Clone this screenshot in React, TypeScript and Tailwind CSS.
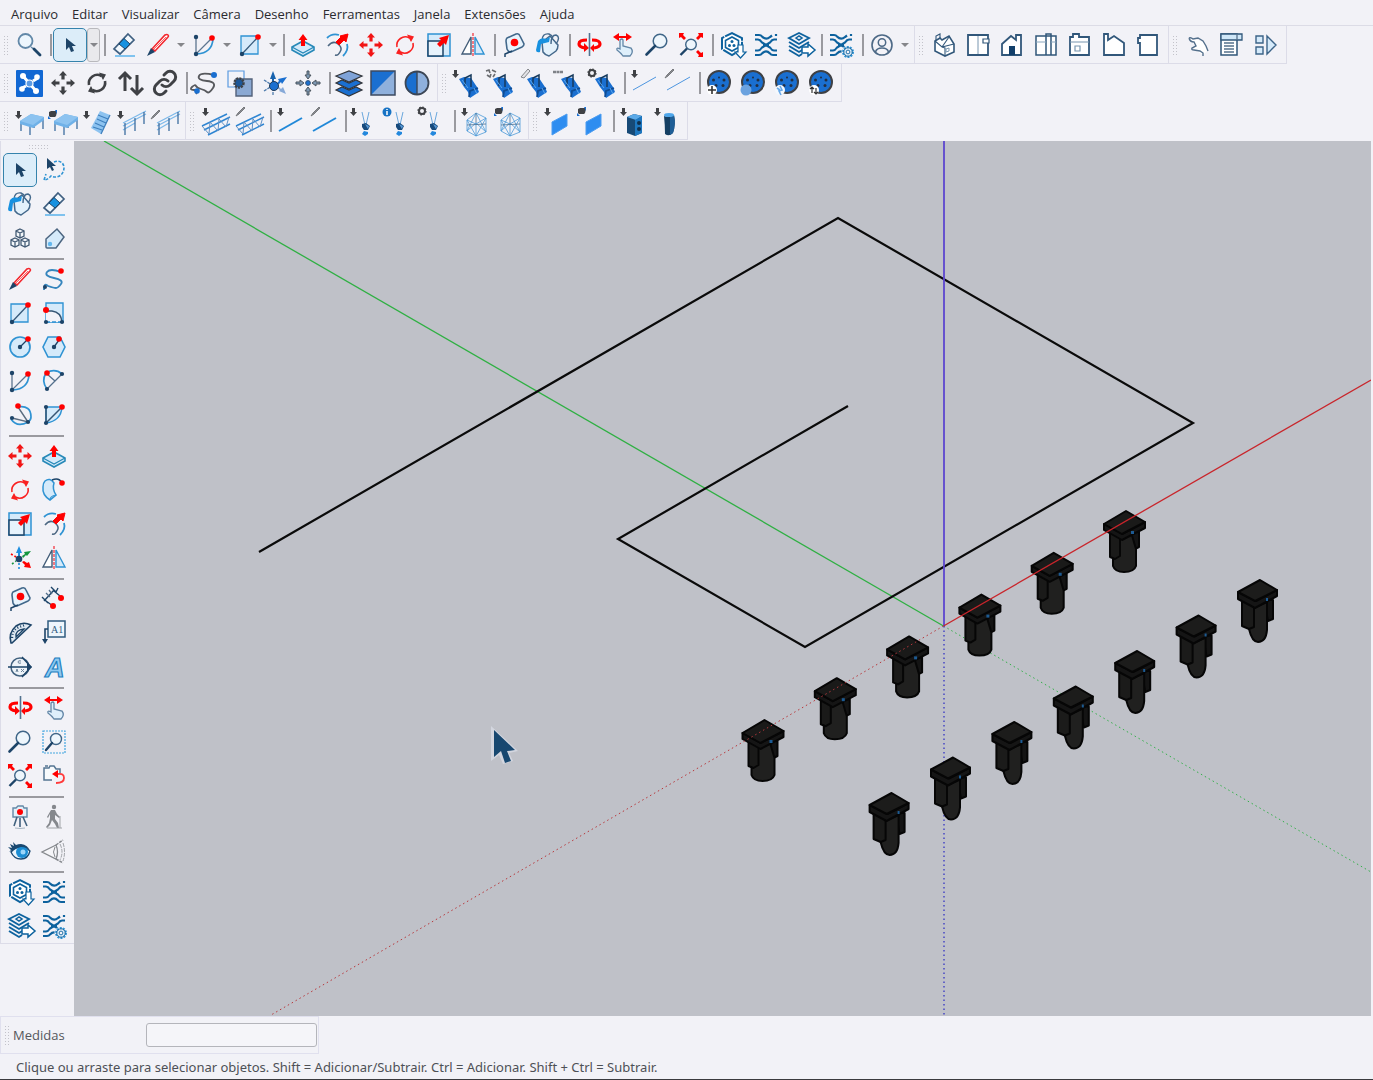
import React from 'react';

const NAVY = '#1d4468';
const BLUE = '#2f93d3';
const SKY = '#d5eafa';
const RED = '#ff0000';
const DARK = '#3f4145';
const STEEL = '#1a6fd0';

const DOWN_BADGE = <path d="M0 0h3v4h2l-3.5 4L-2 4h2z" fill={DARK} />;
const PEN_BADGE = <path d="M-2 8 0 5 6-1 7 0 1 6z" fill="#8b8d92" stroke="#77797d" strokeWidth="1" />;
const BLOB_BADGE = (
  <>
    <path d="M-2 1 0 0h5l1 1-1 4-1 1h-5l-1-1z" fill={DARK} />
    <path d="M-3 5v3h3M6 3V-1H4" fill={STEEL} />
  </>
);
const GEAR_BADGE = (
  <>
    <circle cx="2" cy="3" r="3" fill="none" stroke={DARK} strokeWidth="2" />
    <circle cx="2" cy="3" r="4" fill="none" stroke={DARK} strokeWidth="1.2" strokeDasharray="1.6 1.5" />
  </>
);

// four arrows pointing away from the middle
const moveArrows = (color: string) => (
  <g fill={color}>
    {[0, 90, 180, 270].map((angle) => (
      <path key={angle} transform={`rotate(${angle} 12 12)`} d="M12 0l4 4.5h-2.4v4h-3.2v-4H8z" />
    ))}
  </g>
);

const syncArrows = (color: string, width: number) => (
  <>
    <path d="M4 14A8.5 8.5 0 0 1 16.5 5M20 10A8.5 8.5 0 0 1 7.5 19" fill="none" stroke={color} strokeWidth={width} />
    <path d="M14 1.5 21 3.5 18 9zM10 22.500 3 20.5 6 15z" fill={color} />
  </>
);

const magnifier = (
  <>
    <circle cx="15" cy="8" r="6.8" fill="#eef6fc" stroke="#3f6688" strokeWidth="1.5" />
    <path d="M10 13 1.5 21.5" stroke={NAVY} strokeWidth="2.6" strokeLinecap="round" />
  </>
);

const fitArrows = (
  <>
    <circle cx="12" cy="11.5" r="5.3" fill="#eef6fc" stroke="#3f6688" strokeWidth="1.4" />
    <path d="M8 15.5 1.5 22" stroke={NAVY} strokeWidth="2.4" />
    <path
      d="M0 0h5L4 2l3 3-2 2-3-3-2 1zM24 0v5l-2-1-3 3-2-2 3-3-1-2zM24 24h-5l1-2-3-3 2-2 3 3 2-1z"
      fill={RED}
    />
  </>
);

const wave = (
  <g fill="none" stroke="#0d629e" strokeWidth="2.2">
    <path d="M1 2h4q2 0 3 1.500 4 4 8 .5l2-1.500M1 22h4q2 0 3-1.500 4-4 8 0 1 1.500 3 1.500h4M22 1v2" />
    <path d="M1 6.500h3q2 0 4 3l4 2.500 4-2.500q2-3 4-3h3M1 17.500h3q2 0 4-3l4-2.500 4 2.500q2 3 4 3h3" />
    <path d="M9 12h6" />
  </g>
);

const smallGear = (
  <>
    <circle cx="19" cy="19" r="6.5" fill="#f3f3f8" />
    <circle cx="19" cy="19" r="5" fill="none" stroke={BLUE} strokeWidth="2" strokeDasharray="2 1.1" />
    <circle cx="19" cy="19" r="4.2" fill="#e3f1fb" stroke="#0d629e" strokeWidth="1" />
    <circle cx="19" cy="19" r="1.9" fill="#f3f3f8" stroke="#0d629e" strokeWidth="0.9" />
  </>
);

const fixture = (badge: React.ReactNode) => (
  <>
    <path d="M4 8l5-2 7 1 6 9 2 5-9 6-2-6-4-5z" fill={STEEL} />
    <path d="M10 15V7l6-3v12" fill="none" stroke="#173a5c" strokeWidth="1.5" />
    <path d="M14 26l1-6 8-3" fill="none" stroke="#0f4c93" strokeWidth="1.800" />
    <path d="M19 17l3 6M7 9l6 8" stroke="#5ba7ee" strokeWidth="1" />
    <g transform="translate(-1 -1)">{badge}</g>
  </>
);

const socket = (badge: React.ReactNode) => (
  <>
    <circle cx="12" cy="11" r="11" fill={STEEL} stroke={DARK} strokeWidth="2" />
    <g fill="#222f42">
      <circle cx="6.5" cy="9" r="1.5" />
      <circle cx="12" cy="6.5" r="1" />
      <circle cx="17" cy="9" r="1.5" />
      <circle cx="9" cy="14.5" r="1.5" />
      <circle cx="16" cy="14.5" r="1.5" />
    </g>
    {badge}
  </>
);

const platform = (badge: React.ReactNode) => (
  <>
    <path d="M4 13v9M13 17v9M26 9v11M17 15v4" stroke="#3c6da0" strokeWidth="1.3" />
    <path d="M3 12 14 5l13 3v3l-11 8-13-4z" fill="#6fb1e8" />
    <path d="M3 12 14 5l13 3-11 8z" fill="#8dc3f0" />
    <g transform="translate(0 2)">{badge}</g>
  </>
);

const railing = (badge: React.ReactNode) => (
  <>
    <path d="M4 14 27 2M4 17 27 5M4 21l12-7" stroke="#7db9ea" strokeWidth="1.3" />
    <path d="M6 14v12M16 9v13M25 3v12" stroke="#3c6da0" strokeWidth="1.3" />
    <g transform="translate(0 2)">{badge}</g>
  </>
);

const truss = (badge: React.ReactNode) => (
  <>
    <g fill="none" stroke="#2f86d3">
      <path d="M-1 17 24 5M1 21 27 8M5 26l22-11" strokeWidth="1.5" />
      <path d="M-1 17l7 8 1-12 8 9 1-12 7 8 3-10" stroke="#5f8fc4" strokeWidth="1" />
    </g>
    <g transform="translate(1 -1)">{badge}</g>
  </>
);

const bar = (badge: React.ReactNode, top: number, width: number) => (
  <>
    <path d={`M1 ${top + 13}L24 ${top}`} stroke={width > 1 ? '#2088d8' : '#4d96e0'} strokeWidth={width} />
    <g transform="translate(1 -1)">{badge}</g>
  </>
);

const hanging = (badge: React.ReactNode) => (
  <>
    <path d="M9 3l3 13M16 3l-3 13" stroke="#6aa7dd" strokeWidth="1" />
    <path d="M9 15l4-1 4 3-2 4h-4l-2-3z" fill="#174a7c" />
    <path d="M12 15l4 2-1 3z" fill="#5a9bd8" />
    <path d="M11 22l4 1v2l-3 2-3-2z" fill="#2388dd" />
    <g transform="translate(-1 -1)">{badge}</g>
  </>
);

const wireCube = (badge: React.ReactNode) => (
  <>
    <g fill="none" stroke="#4c9ad8" strokeWidth="0.8">
      <path d="M5 11 14 4l10 5v14l-10 4-9-5zM5 11l9 4 10-6M14 15v12M5 11l9 16L24 9M5 22l9-18 10 19M5 22l9-8 10 9" />
      <path d="M14 4v10M5 16l19-1" stroke="#4d7090" />
    </g>
    <g transform="translate(1 -1)">{badge}</g>
  </>
);

const panel = (badge: React.ReactNode) => (
  <>
    <path d="M6 13 21 5v12L6 26z" fill="#2e8df0" stroke="#4b9cf0" strokeWidth="1" />
    <g transform="translate(0 -1)">{badge}</g>
  </>
);

const icons: Record<string, React.ReactNode> = {
  search: (
    <>
      <circle cx="8.5" cy="8" r="7" fill="#edf6fd" stroke="#6288a8" strokeWidth="1.8" />
      <path d="M14 14l4 3" stroke="#6288a8" strokeWidth="1.4" />
      <path d="M17 16l6 6" stroke={NAVY} strokeWidth="2.8" strokeLinecap="round" />
    </>
  ),
  select: <path d="M8 5v12l3-3 2 5 3-1-2-5h4z" fill={NAVY} />,
  lasso: (
    <>
      <path d="M12 4c8-3 12 4 9 10-2 5-8 6-12 4-2 2-4 4-7 4l2-6" fill="none" stroke={BLUE} strokeWidth="1.6" strokeDasharray="3 1.5" />
      <path d="M5 0v11l3-2 2 4 2-1-2-4h4z" fill={NAVY} />
    </>
  ),
  eraser: (
    <>
      <path d="M16 1l6 6L8 21l-6-5z" fill="#f2f8fd" stroke="#3f5f80" strokeWidth="1.7" />
      <path d="M12 5.5l6 5.500-5 5-6-5z" fill="#1791e0" stroke={NAVY} />
      <path d="M3 23h20" stroke="#62b6ec" strokeWidth="1.6" />
    </>
  ),
  pencil: (
    <>
      <path d="M6 16 19 2q2-1 3 0t0 2L9 18z" fill="#fff" stroke="#f3262d" strokeWidth="1.6" />
      <path d="M8 16 20 4" stroke="#f3262d" strokeWidth="0.7" />
      <path d="M1 23l4-8 4 4z" fill={NAVY} />
    </>
  ),
  arc: (
    <>
      <path d="M4 4v17L20 5" fill="none" stroke="#5c7590" strokeWidth="1.3" />
      <path d="M5 21Q20 20 21 6" fill="none" stroke={BLUE} strokeWidth="1.7" />
      <circle cx="4" cy="4" r="2.2" fill={NAVY} />
      <circle cx="4" cy="21" r="2.2" fill={NAVY} />
      <circle cx="20" cy="5" r="2.8" fill={RED} />
    </>
  ),
  rectangle: (
    <>
      <path d="M3 3h17v18H3z" fill={SKY} stroke={BLUE} strokeWidth="1.3" />
      <path d="M4 21 20 4" stroke="#35597a" strokeWidth="1.3" />
      <circle cx="4" cy="21" r="2.2" fill={NAVY} />
      <circle cx="20" cy="4" r="2.8" fill={RED} />
    </>
  ),
  pushPull: (
    <>
      <path d="M1 14 12 8l11 6v3l-11 6L1 17z" fill={SKY} stroke="#2789b8" strokeWidth="1.6" />
      <path d="M1 14l11 6 11-6" fill="none" stroke="#2789b8" strokeWidth="1.3" />
      <path d="M12 1l4.500 6h-2.500v6h-4V7H7.5z" fill={RED} />
    </>
  ),
  offset: (
    <>
      <path d="M2 5Q7 0 14 2M22 11q2 6-4 12" fill="none" stroke={BLUE} strokeWidth="1.8" />
      <path d="M3 13q5-6 10-2t2 8q-2 4-5 3" fill="none" stroke="#4d6883" strokeWidth="1.5" />
      <path d="M15 3l8-2-2 8-2-2-5 5-3-3 5-5z" fill={RED} stroke={RED} strokeWidth="1" />
    </>
  ),
  move: moveArrows('#f21515'),
  rotate: syncArrows('#fa2020', 1.6),
  scale: (
    <>
      <path d="M1 1h22v22H1z" fill={SKY} stroke={BLUE} strokeWidth="1.5" />
      <path d="M1 8h15v15H1z" fill="#e7f3fc" stroke={NAVY} strokeWidth="1.5" />
      <path d="M12 5l10-3-3 10-2-2-4 4-3-3 4-4z" fill={RED} />
    </>
  ),
  flip: (
    <>
      <path d="M10 4v17H1z" fill="#fff" stroke="#435d79" strokeWidth="1.4" />
      <path d="M14 4v17h9z" fill={SKY} stroke={BLUE} strokeWidth="1.4" />
      <path d="M12 0v23" stroke="#f26d75" strokeWidth="1.8" strokeDasharray="3 1" />
    </>
  ),
  tape: (
    <>
      <path d="M5 5 14 1q3-1 4 2l4 8q0 2-2 3L9 19q-3 0-4-3L4 8q0-2 1-3z" fill="#e7f3fc" stroke="#42688b" strokeWidth="1.6" />
      <path d="M10 18 3 21v3" fill="none" stroke={NAVY} strokeWidth="1.5" />
      <circle cx="12.500" cy="9.5" r="3.8" fill={RED} />
    </>
  ),
  paint: (
    <>
      <path d="M6 9 14 3l8 9q0 4-2 6l-7 5q-4-1-6-4z" fill="#e3f1fb" stroke="#43688b" strokeWidth="1.5" />
      <path d="M6 8q0-8 7-7 3 1 4 4M15 11q0-9 5-9 5 2 0 9" fill="none" stroke="#43688b" strokeWidth="1.4" />
      <path d="M2 8q3-4 8-2l4-2-1 5-8 2-1 8q-4 1-4-2z" fill="#1791e0" />
    </>
  ),
  orbit: (
    <>
      <path d="M10 7Q2 7 2 11q0 3 6 4M15 7q8 0 8 4 0 3-6 4" fill="none" stroke={RED} strokeWidth="3.2" />
      <path d="M7 10l5 5-5 4zM17 11l-4 4 4 4z" fill={RED} />
      <path d="M12.5 0v23" stroke="#53728f" strokeWidth="1.6" />
    </>
  ),
  pan: (
    <>
      <path d="M9 7q2-2 3 0v6l8 2q3 4-1 8h-7q-2-3-6-6-1-3 3-1z" fill="#deeffb" stroke="#6386a6" strokeWidth="1.3" />
      <path d="M2 4l6-4v3h7V0l6 4-6 4V5H8v3z" fill={RED} />
    </>
  ),
  zoom: magnifier,
  zoomExtents: fitArrows,
  warehouse: (
    <>
      <path d="M12 0l10 5v11l-10 6-10-6V5z" fill="#fff" stroke="#0d629e" strokeWidth="2" strokeDasharray="14 1" />
      <path d="M12 4l6.5 3.5v7L12 18l-6.5-3.5v-7z" fill="none" stroke="#0d629e" strokeWidth="1.6" />
      <circle cx="12" cy="8.5" r="1.5" fill="#0d629e" />
      <circle cx="9.5" cy="12.500" r="1.5" fill="#0d629e" />
      <circle cx="14" cy="12.500" r="1.5" fill="#0d629e" />
      <path d="M18 12h5v7h3l-5.5 6L15 19h3z" fill="#fff" stroke="#0d629e" strokeWidth="1.2" />
    </>
  ),
  extensionStore: wave,
  shareModel: (
    <>
      <g fill="none" stroke="#0d629e" strokeWidth="1.9">
        <path d="M1 5l10-5 10 5-10 6zM1 9l10 6 10-6M1 13l10 6 5-3M1 17l10 6 3-2" />
        <path d="M8 5l3-2 3 2-3 2z" strokeWidth="1.5" />
      </g>
      <path d="M14 14h6v-3l7 6-7 6v-3h-6z" fill="#fff" stroke="#0d629e" strokeWidth="1.5" />
    </>
  ),
  extensionManager: (
    <>
      {wave}
      {smallGear}
    </>
  ),
  account: (
    <>
      <circle cx="12" cy="12" r="10" fill="#f3f3f8" stroke="#4d6986" strokeWidth="1.6" />
      <circle cx="12" cy="9.5" r="3.7" fill="none" stroke="#4d6986" strokeWidth="1.5" />
      <path d="M5.5 19q1-4 6.500-4t6.500 4" fill="none" stroke="#4d6986" strokeWidth="1.6" />
    </>
  ),
  viewIso: (
    <>
      <path d="M3 8l5-3 2 2 7-4 5 8v8l-9 4-10-5z" fill="#fff" stroke="#31577a" strokeWidth="1.6" />
      <path d="M3 8l7 6 7-10M10 14l3 1v8M10 14l12-3M4 7V3l4-2v4" fill="none" stroke="#31577a" strokeWidth="1.1" />
      <path d="M14 16l3-1v3l-3 1z" fill="none" stroke="#7896b0" strokeWidth="1" />
    </>
  ),
  viewTop: (
    <>
      <path d="M2 2h20v20H2z" fill="#fff" stroke="#31577a" strokeWidth="1.8" />
      <path d="M12 3v18" stroke="#7896b0" />
      <path d="M17 6h6v4h-6z" stroke="#31577a" strokeWidth="1.200" fill="#fff" />
    </>
  ),
  viewFront: (
    <>
      <path d="M2 22V11l9-8 5 4V2h5v20z" fill="#fff" stroke="#31577a" strokeWidth="1.8" />
      <path d="M9 13h6v9H9z" fill="#123f6a" />
    </>
  ),
  viewRight: (
    <>
      <path d="M2 3h20v19H2zM12 1h5v21h-5z" fill="#fff" stroke="#31577a" strokeWidth="1.5" />
      <path d="M2 9h10M17 9h5" stroke="#8ba7bf" />
    </>
  ),
  viewBack: (
    <>
      <path d="M2 4h3V1h6v3h10v18H2z" fill="#fff" stroke="#31577a" strokeWidth="1.8" />
      <path d="M2 9h19M7 13h5v5H7z" fill="none" stroke="#7896b0" strokeWidth="1.2" />
    </>
  ),
  viewLeft: <path d="M2 22V1h4v6l6-4 10 7v12z" fill="#fff" stroke="#31577a" strokeWidth="1.800" />,
  viewBottom: <path d="M4 2h17v20H4V10H2V5h2z" fill="#fff" stroke="#31577a" strokeWidth="1.800" />,
  interact: (
    <>
      <path d="M5 6l7 1 5 2 5 8-5 5-8-5-3-4 4 1-3-4z" fill="#fff" />
      <path d="M3 5q2-1 4 1l5-1 5 3 3 5 2 5M3 5q1 4 5 4l2 4-4 2q-1 2 2 2l6 1 3 2v3" fill="none" stroke="#54708c" strokeWidth="1.4" />
    </>
  ),
  componentOptions: (
    <>
      <path d="M1 1h16v21H1z" fill="#fff" stroke="#31577a" strokeWidth="1.5" />
      <path d="M1 1h21v6H1z" fill="#cfe7f8" stroke="#31577a" strokeWidth="1.3" />
      <path d="M17 1v6M4 10h10M4 13h10M4 16h10M4 19h10" stroke="#56718c" strokeWidth="1.3" />
    </>
  ),
  componentAttributes: (
    <path d="M2 3h7v7H2zM2 14h7v7H2zM13 3l9 9-9 9z" fill={SKY} stroke="#3c6488" strokeWidth="1.4" />
  ),
  nodeTruss: (
    <>
      <rect x="-1" y="-1" width="27" height="27" rx="1" fill="#1268d3" />
      <path d="M6 5l13 15M21 7l-5 3M3 18l6-3" stroke="#fff" strokeWidth="3" fill="none" />
      <g fill="#fff">
        <circle cx="6" cy="5" r="3" />
        <circle cx="20" cy="6" r="2.8" />
        <circle cx="5" cy="18" r="2.8" />
        <circle cx="19" cy="20" r="3" />
      </g>
      <circle cx="12.5" cy="12.5" r="3.5" fill="#5b9ae3" stroke="#fff" strokeWidth="1.2" />
    </>
  ),
  moveDark: moveArrows(DARK),
  syncDark: syncArrows(DARK, 2.6),
  swap: (
    <path
      d="M6 20V2M0 8l6-6 6 6M18 4v19M12 17l6 6 6-6"
      fill="none"
      stroke={DARK}
      strokeWidth="3"
    />
  ),
  link: (
    <g fill="none" stroke={DARK} strokeWidth="3" strokeLinecap="round">
      <path d="M9 14a6 6 0 0 0 8 0l4-4a5.500 5.500 0 0 0-8-8l-2 2" />
      <path d="M15 10a6 6 0 0 0-8 0l-4 4a5.500 5.500 0 0 0 8 8l2-2" />
    </g>
  ),
  cable: (
    <>
      <path d="M20 4Q7 1 5 5t8 5 6 7-6 4-6-3-5-3-4 1 2 3 2 4" fill="none" stroke="#57595d" strokeWidth="1.8" />
      <circle cx="20" cy="4" r="3" fill={STEEL} />
      <circle cx="3" cy="20" r="2.8" fill={STEEL} />
    </>
  ),
  group: (
    <>
      <path d="M0 0h16v16H0z" fill="#f3f3f8" stroke="#5a9ae0" strokeWidth="1.2" />
      <path d="M8 8h16v17H8z" fill="#8ba9d3" stroke="#53617a" strokeWidth="1.4" />
      <circle cx="11" cy="12" r="4.500" fill="#1d5798" stroke={DARK} strokeWidth="2.5" strokeDasharray="2 1" />
    </>
  ),
  axesBlue: (
    <>
      <path d="M11 0l3 8h-2v6h-2V8H8z" fill="#1762ae" />
      <path d="M25 6l-5 7-1-2-4 4-1-2 3-3-1-2z" fill={STEEL} />
      <path d="M2 9l8 5M2 20l8-5M11 24v-7" stroke="#4f7cad" strokeWidth="1.3" strokeDasharray="3 1" />
      <path d="M24 23l-7-3 1-1-4-3 2-1 3 3 2-2z" fill="#86a9d8" />
      <circle cx="12" cy="15" r="4.500" fill={STEEL} stroke="#1e3a58" />
    </>
  ),
  gather: (
    <>
      <g fill="#7d98b3" stroke="#4b545e" strokeWidth="1">
        {[0, 90, 180, 270].map((angle) => (
          <path key={angle} transform={`rotate(${angle} 12 12)`} d="M11 0h2v4h2l-3 4-3-4h2z" />
        ))}
      </g>
      <circle cx="12" cy="12" r="2.4" fill={STEEL} stroke="#35567c" />
    </>
  ),
  layers: (
    <g stroke="#30343a" strokeWidth="1.2">
      <path d="M-1 19l6-3 7 3 7-3 6 3-13 6z" fill={STEEL} />
      <path d="M-1 12l6-3 7 3 7-3 6 3-13 6z" fill={STEEL} />
      <path d="M-1 5l13-5 13 5-13 6z" fill="#7fa3d8" />
    </g>
  ),
  splitSquare: (
    <>
      <path d="M0 0h24v24H0z" fill="#8fb0dc" />
      <path d="M0 0h24L0 24z" fill={STEEL} />
      <path d="M0 0h24v24H0z" fill="none" stroke="#3c4a60" strokeWidth="1.5" />
    </>
  ),
  splitCircle: (
    <>
      <circle cx="12" cy="12" r="11.5" fill="#8fb0dc" />
      <path d="M12 0a12 12 0 0 0 0 24z" fill={STEEL} />
      <circle cx="12" cy="12" r="11.5" fill="none" stroke="#3c4655" strokeWidth="1.8" />
      <path d="M12 0v24" stroke="#3c4655" strokeWidth="1.4" />
    </>
  ),
  fixtureAdd: fixture(DOWN_BADGE),
  fixtureGroup: fixture(<path d="M-2 1l3-1 1 3M4 0l4 2M-1 5l3 2 1-3M5 7l2-3" fill="none" stroke="#6a6c70" strokeWidth="1.6" />),
  fixtureLink: fixture(<path d="M-1 7l7-8 2 2-6 7z" fill="#e2e2e6" stroke="#85878c" strokeWidth="1" />),
  fixtureLine: fixture(<path d="M-3 2H7" stroke="#7f8288" strokeWidth="2.400" strokeDasharray="3 .5" />),
  fixtureGear: fixture(GEAR_BADGE),
  wireAdd: bar(DOWN_BADGE, 6, 1),
  wireDraw: bar(PEN_BADGE, 6, 1),
  socketAdd: socket(
    <>
      <circle cx="5" cy="19" r="5" fill="#fff" />
      <path d="M5 15v8M1 19h8" stroke="#333" strokeWidth="1.6" />
    </>
  ),
  socketLamp: socket(<circle cx="5" cy="19" r="5.5" fill="#6ba2df" />),
  socketGear: socket(
    <>
      <circle cx="5" cy="19" r="5" fill="#f4f8fd" />
      <path d="M5 15l2 4-3 1 2 4M2 17l3 2" fill="none" stroke="#69aaea" strokeWidth="1.6" />
    </>
  ),
  socketSwap: socket(
    <>
      <circle cx="5" cy="19" r="5" fill="#fff" />
      <path d="M3 22v-6M1 18l2-2 2 2M7 17v6M5 21l2 2 2-2" fill="none" stroke="#333" strokeWidth="1.2" />
    </>
  ),
  platformAdd: platform(DOWN_BADGE),
  platformEdit: platform(BLOB_BADGE),
  stairs: (
    <>
      <path d="M6 19 15 2l10 4-9 19z" fill="#8dc3f0" />
      <path d="M8 18l9 3M10 14l9 4M12 10l9 4M13 6l10 4" stroke="#3e7fbd" strokeWidth="1.1" />
      <path d="M25 6l-9 19" stroke="#3e7fbd" strokeWidth="1.3" />
      <g transform="translate(0 2)">{DOWN_BADGE}</g>
    </>
  ),
  railAdd: railing(DOWN_BADGE),
  railDraw: railing(PEN_BADGE),
  trussAdd: truss(DOWN_BADGE),
  trussDraw: truss(PEN_BADGE),
  barAdd: bar(DOWN_BADGE, 9, 2),
  barDraw: bar(PEN_BADGE, 9, 2),
  hangAdd: hanging(DOWN_BADGE),
  hangInfo: hanging(
    <>
      <circle cx="1" cy="4" r="4.5" fill="#1873c4" />
      <path d="M1 3v4M1 1v1" stroke="#fff" strokeWidth="1.5" />
    </>
  ),
  hangGear: hanging(GEAR_BADGE),
  cubeAdd: wireCube(DOWN_BADGE),
  cubeEdit: wireCube(BLOB_BADGE),
  panelAdd: panel(DOWN_BADGE),
  panelEdit: panel(BLOB_BADGE),
  speaker: (
    <>
      <path d="M6 8l7-3 8 2v17l-7 3-8-3z" fill="#174a77" />
      <path d="M6 8l7-3 8 2-6 4z" fill="#5aa9e8" />
      <path d="M14 11l7-4v17l-7 3z" fill="#1d77c0" />
      <circle cx="18" cy="14" r="2" fill="#102f4c" />
      <circle cx="18" cy="20" r="2" fill="#102f4c" />
      <g transform="translate(1 -1)">{DOWN_BADGE}</g>
    </>
  ),
  column: (
    <>
      <path d="M9 7q5 2 10-1 2 9-1 18-4 4-8 1 0-9-1-18z" fill="#153f63" />
      <path d="M15 8q3 0 4-2 2 9-1 18l-3 2z" fill="#1f5f97" />
      <ellipse cx="14" cy="6" rx="5" ry="2" fill="#4ea6ea" />
      <g transform="translate(1 -1)">{DOWN_BADGE}</g>
    </>
  ),
  components: (
    <g fill="#f5f8fb" stroke="#435b75" strokeWidth="1.3">
      <path d="M12 3l4 2v5l-4 2-4-2V5zM8 5l4 2 4-2M12 7v5" />
      <path d="M7 12l4 2v5l-4 2-4-2v-5zM3 14l4 2 4-2M7 16v5" />
      <path d="M17 12l4 2v5l-4 2-4-2v-5zM13 14l4 2 4-2M17 16v5" />
    </g>
  ),
  tag: (
    <>
      <path d="M4 13 15 3l7 8-8 11H5q-1 0-1-1z" fill={SKY} stroke="#4c6580" strokeWidth="1.5" />
      <circle cx="8" cy="18" r="2.2" fill="#62b7ee" />
    </>
  ),
  freehand: (
    <>
      <path d="M19 5Q8 1 5 5t7 6 7 6-5 4-8-2q-4-4-4 4" fill="none" stroke="#3585bd" strokeWidth="1.8" />
      <circle cx="19" cy="4" r="2.8" fill={RED} />
      <circle cx="3" cy="20" r="2" fill={NAVY} />
    </>
  ),
  rotatedRectangle: (
    <>
      <path d="M4 2h17v19H4z" fill={SKY} stroke={BLUE} strokeWidth="1.4" />
      <path d="M4 10h6q9 1 10 11H4z" fill="#f3f3f8" />
      <path d="M4 10h6q9 1 10 11" fill="none" stroke="#355573" strokeWidth="1.5" />
      <path d="M4 21h16" stroke={BLUE} strokeWidth="1.4" strokeDasharray="4 2" />
      <circle cx="4" cy="21" r="2.1" fill={NAVY} />
      <circle cx="20" cy="21" r="2.1" fill={NAVY} />
      <circle cx="4" cy="9" r="3" fill={RED} />
    </>
  ),
  circle: (
    <>
      <circle cx="12" cy="12" r="10" fill={SKY} stroke={BLUE} strokeWidth="1.7" />
      <path d="M12 12l7-7" stroke={NAVY} strokeWidth="1.3" />
      <circle cx="12" cy="12" r="2.2" fill={NAVY} />
      <circle cx="20" cy="4" r="2.8" fill={RED} />
    </>
  ),
  polygon: (
    <>
      <path d="M6 2h12l5 10-5 10H6L1 12z" fill={SKY} stroke={BLUE} strokeWidth="1.6" />
      <path d="M12 12l5-7" stroke={NAVY} strokeWidth="1.3" />
      <circle cx="12" cy="12" r="2.2" fill={NAVY} />
      <circle cx="17" cy="4" r="2.8" fill={RED} />
    </>
  ),
  arcTwoPoint: (
    <>
      <path d="M4 4Q13-1 20 5M4 4q-5 8 1 16" fill="none" stroke={BLUE} strokeWidth="1.7" />
      <path d="M5 5l8 7M5 20 20 5" stroke="#54708c" strokeWidth="1.3" />
      <circle cx="20" cy="5" r="2.1" fill={NAVY} />
      <circle cx="5" cy="20" r="2.1" fill={NAVY} />
      <circle cx="5" cy="4" r="2.8" fill={RED} />
    </>
  ),
  arcThreePoint: (
    <>
      <path d="M10 4q13-2 13 10 0 3-3 5M3 16q6 9 17 3" fill="none" stroke={BLUE} strokeWidth="1.7" />
      <path d="M10 4l10 15L4 15" fill="none" stroke="#5b6d80" strokeWidth="1.4" />
      <circle cx="4" cy="15" r="2.1" fill={NAVY} />
      <circle cx="20" cy="19" r="2.1" fill={NAVY} />
      <circle cx="10" cy="3" r="2.8" fill={RED} />
    </>
  ),
  pie: (
    <>
      <path d="M4 4h16Q19 18 4 20z" fill={SKY} stroke={BLUE} strokeWidth="1.5" />
      <path d="M4 4v16L20 4" fill="none" stroke="#355573" strokeWidth="1.5" />
      <circle cx="4" cy="4" r="2.1" fill={NAVY} />
      <circle cx="4" cy="20" r="2.1" fill={NAVY} />
      <circle cx="20" cy="4" r="2.8" fill={RED} />
    </>
  ),
  followMe: (
    <>
      <path d="M3 3q5-4 9 2-2 6 2 12l-6 5Q0 17 1 9q0-4 2-6z" fill={SKY} stroke={BLUE} strokeWidth="1.5" />
      <path d="M8 22q0-4 6-5" fill="none" stroke={BLUE} strokeWidth="1.2" />
      <path d="M10 2q7-3 10 3" fill="none" stroke={NAVY} strokeWidth="1.5" />
      <circle cx="20" cy="5" r="2.8" fill={RED} />
    </>
  ),
  axes: (
    <>
      <path d="M11 0l3 7h-2v4h-2V7H8z" fill="#1f8fe0" />
      <path d="M23 5l-4 5-1-1-3 3-1-2 3-2-1-2z" fill="#15963f" />
      <path d="M23 22l-7-1 1-2-3-3 2-1 3 2 2-1z" fill={RED} />
      <path d="M3 8l5 3" stroke={RED} strokeWidth="1.6" strokeDasharray="2 2" />
      <path d="M4 18l4-3" stroke="#15963f" strokeWidth="1.6" strokeDasharray="2 2" />
      <path d="M11 17v6" stroke="#1f8fe0" strokeWidth="1.6" strokeDasharray="2 2" />
      <circle cx="11" cy="13" r="3.3" fill={NAVY} />
    </>
  ),
  dimension: (
    <>
      <path d="M2 14 12 3M9 0l5 5M0 10l6 6M16 1l-2 4M4 14l7 5M12 4l6 5" stroke={NAVY} strokeWidth="1.4" />
      <path d="M4 6l4 4M7 3l3 4" stroke="#54708c" strokeWidth="1.3" />
      <circle cx="19" cy="11" r="3" fill={RED} />
      <circle cx="11" cy="19" r="3" fill={RED} />
    </>
  ),
  protractor: (
    <>
      <path d="M3 22Q0 12 8 5q7-5 15-1L4 22z" fill="#dfe9f2" stroke={NAVY} strokeWidth="1.6" />
      <path d="M8 16q-1-7 8-8z" fill="#f3f3f8" stroke={NAVY} strokeWidth="1.3" />
      <path d="M4 17q0-8 7-11l6-2" fill="none" stroke={NAVY} strokeWidth="2.4" strokeDasharray="1 2" />
    </>
  ),
  text: (
    <>
      <path d="M6 0h17v16H6z" fill="#eef6fc" stroke="#315c80" strokeWidth="1.5" />
      <path d="M6 8H3v11" fill="none" stroke={NAVY} strokeWidth="1.6" />
      <path d="M0 18h6l-3 5z" fill={NAVY} />
      <text x="9" y="12" fontSize="10" fontFamily="Liberation Serif, serif" fill="#315c80">
        A1
      </text>
    </>
  ),
  section: (
    <>
      <circle cx="12" cy="12" r="9" fill="#eef4f9" stroke="#42627f" strokeWidth="1.5" />
      <path d="M0 12h20M14 2l9 10-9 10" fill="none" stroke={NAVY} strokeWidth="1.5" />
      <path d="M19 8l5 4-5 4z" fill={NAVY} />
      <path d="M13 6q-3-1-3 1t3 1M8 17l1-3 1 3M13 14l3 3M16 14l-3 3" fill="none" stroke="#6d859c" />
    </>
  ),
  text3d: (
    <text x="3" y="22" fontSize="27" fontStyle="italic" fontWeight="bold" fontFamily="Liberation Sans, sans-serif" fill="#8ec9f1" stroke="#1d7fc0" strokeWidth="1.2">
      A
    </text>
  ),
  zoomWindow: (
    <>
      <path d="M1 1h22v22H1z" fill="none" stroke="#43a5df" strokeWidth="1.2" strokeDasharray="2 1" />
      <circle cx="14" cy="9" r="5.5" fill="#eef6fc" stroke="#3f6688" strokeWidth="1.4" />
      <path d="M10 13l-6 7" stroke={NAVY} strokeWidth="2.4" strokeLinecap="round" />
    </>
  ),
  zoomPrevious: (
    <>
      <path d="M18 9V5h-4l-2-3H8L7 4H2v12h8M3 2h3" fill="#f7fafc" stroke="#557592" strokeWidth="1.5" />
      <path d="M16 10q6-1 6 4 0 5-8 5" fill="none" stroke="#ff3a3a" strokeWidth="1.8" />
      <path d="M10 10l6-4v8z" fill={RED} />
    </>
  ),
  positionCamera: (
    <>
      <path d="M5 3h3l2-2h5l1 2h3v9H5z" fill="#e4f0f9" stroke="#6489a8" strokeWidth="1.4" />
      <path d="M9 12 6 21M12 13v9M15 12l4 9" stroke="#42627f" strokeWidth="1.6" />
      <path d="M7 23q5 1 10 0" stroke="#a7b5c2" fill="none" />
      <circle cx="12" cy="7" r="3" fill={RED} />
    </>
  ),
  walk: (
    <>
      <circle cx="12" cy="2" r="2.200" fill="#85888d" />
      <path d="M9 5h4l2 4 3 3-1 1-4-3v4l3 4 1 5h-2l-2-4-3-4-2 5-3 3-1-1 3-4 1-5V9l-2 4-1-1z" fill="#85888d" />
      <path d="M18 11v12M5 23h15" stroke="#a0a3a8" fill="none" />
    </>
  ),
  lookAround: (
    <>
      <path d="M3 13q9-10 19-1-2 8-9 8-7 0-10-7z" fill="#e8f4fc" stroke="#194870" strokeWidth="1.3" />
      <circle cx="14" cy="13" r="6" fill="#1b8dd3" />
      <circle cx="15" cy="13" r="2.5" fill="#9bd6fa" />
      <path d="M1 13Q8 9 13 8q6 0 9 4-2-6-9-7-3 0-5 1L5 3l1 4-4-2 2 4-4-1 3 3z" fill="#194870" />
    </>
  ),
  sectionView: (
    <>
      <path d="M14 6 0 13l14 7q3-7 0-14z" fill="#f5f5f8" stroke="#85888d" strokeWidth="1.3" />
      <path d="M14 6l7-5M14 20l7 4" stroke="#85888d" strokeWidth="1.5" strokeDasharray="3 1" />
      <path d="M18 5q4 8 0 16M21 4q3 9 0 18" stroke="#a0a3a8" fill="none" strokeDasharray="4 1" />
      <path d="M13 8q-3 5 0 10" stroke="#85888d" fill="none" />
    </>
  ),
};

const MENU = ['Arquivo', 'Editar', 'Visualizar', 'Câmera', 'Desenho', 'Ferramentas', 'Janela', 'Extensões', 'Ajuda'];

// '|' draws a divider, 'v' draws the small drop-down arrow of the tool before it
const TOOLBAR_ROWS: string[][][] = [
  [
    [
      'search', '|', 'select', 'v', '|', 'eraser', 'pencil', 'v', 'arc', 'v', 'rectangle', 'v', '|',
      'pushPull', 'offset', 'move', 'rotate', 'scale', 'flip', '|', 'tape', 'paint', '|',
      'orbit', 'pan', 'zoom', 'zoomExtents', '|', 'warehouse', 'extensionStore', 'shareModel', '|',
      'extensionManager', '|', 'account', 'v',
    ],
    ['viewIso', 'viewTop', 'viewFront', 'viewRight', 'viewBack', 'viewLeft', 'viewBottom'],
    ['interact', 'componentOptions', 'componentAttributes'],
  ],
  [
    [
      'nodeTruss', 'moveDark', 'syncDark', 'swap', 'link', '|', 'cable', 'group', 'axesBlue', 'gather', '|',
      'layers', 'splitSquare', 'splitCircle',
    ],
    [
      'fixtureAdd', 'fixtureGroup', 'fixtureLink', 'fixtureLine', 'fixtureGear', '|', 'wireAdd', 'wireDraw', '|',
      'socketAdd', 'socketLamp', 'socketGear', 'socketSwap',
    ],
  ],
  [
    ['platformAdd', 'platformEdit', 'stairs', 'railAdd', 'railDraw'],
    [
      'trussAdd', 'trussDraw', '|', 'barAdd', 'barDraw', '|', 'hangAdd', 'hangInfo', 'hangGear', '|',
      'cubeAdd', 'cubeEdit',
    ],
    ['panelAdd', 'panelEdit', '|', 'speaker', 'column'],
  ],
];

const SIDE_GROUPS: string[][] = [
  ['select', 'lasso', 'paint', 'eraser', 'components', 'tag'],
  [
    'pencil', 'freehand', 'rectangle', 'rotatedRectangle', 'circle', 'polygon', 'arc', 'arcTwoPoint',
    'arcThreePoint', 'pie',
  ],
  ['move', 'pushPull', 'rotate', 'followMe', 'scale', 'offset', 'axes', 'flip'],
  ['tape', 'dimension', 'protractor', 'text', 'section', 'text3d'],
  ['orbit', 'pan', 'zoom', 'zoomWindow', 'zoomExtents', 'zoomPrevious'],
  ['positionCamera', 'walk', 'lookAround', 'sectionView'],
  ['warehouse', 'extensionStore', 'shareModel', 'extensionManager'],
];

const ToolButton: React.FC<{ name: string }> = ({ name }) => (
  <button
    type="button"
    aria-label={name}
    aria-pressed={name === 'select'}
    className={
      name === 'select'
        ? 'flex h-[34px] w-[34px] items-center justify-center rounded-[5px] border border-[#3583ac] bg-[#dcedf9]'
        : 'flex h-[34px] w-[34px] items-center justify-center'
    }
  >
    <svg viewBox="0 0 24 24" className="h-6 w-6 shrink-0 overflow-visible" aria-hidden="true">
      {icons[name]}
    </svg>
  </button>
);

const DropArrow: React.FC<{ framed: boolean }> = ({ framed }) => (
  <button
    type="button"
    aria-label="Mais opções"
    className={
      framed
        ? 'flex h-[34px] w-[13px] items-center justify-center rounded-[3px] border border-[#b9b9bd] bg-[#e9e9ec]'
        : 'flex h-[34px] w-3 items-center justify-center'
    }
  >
    <svg viewBox="0 0 8 4" className="h-1 w-2 shrink-0" aria-hidden="true">
      <path d="M0 0h8L4 4z" fill="#85868a" />
    </svg>
  </button>
);

const Grip: React.FC = () => (
  <div className="flex w-3 shrink-0 items-center justify-center">
    <div className="h-5 w-1.5 bg-[radial-gradient(#c3c3ca_1px,transparent_1px)] bg-[size:3px_3px]" />
  </div>
);

const Toolbar: React.FC<{ tools: string[] }> = ({ tools }) => (
  <div role="toolbar" className="flex shrink-0 border-r border-b border-[#dcdce8] pr-[3px]">
    <Grip />
    {tools.map((tool, index) => {
      if (tool === '|') {
        return (
          <div key={index} className="flex w-[7px] items-center justify-end pr-px">
            <div className="h-[22px] w-0.5 bg-[#9a9a9f]" />
          </div>
        );
      }
      return (
        <div key={index} className="flex items-center">
          {tool === 'v' ? <DropArrow framed={tools[index - 1] === 'select'} /> : <ToolButton name={tool} />}
        </div>
      );
    })}
  </div>
);

const SidePanel: React.FC = () => (
  <aside className="w-[74px] shrink-0">
    <div className="border-b border-l border-[#dcdce8] px-0.5">
      <div className="flex h-3 items-center justify-center">
        <div className="h-1.5 w-5 bg-[radial-gradient(#c3c3ca_1px,transparent_1px)] bg-[size:3px_3px]" />
      </div>
      {SIDE_GROUPS.map((group, index) => (
        <React.Fragment key={index}>
          {index > 0 && (
            <div className="flex h-[7px] items-center px-1.5">
              <div className="h-0.5 w-[55px] bg-[#9a9a9f]" />
            </div>
          )}
          <div className="grid w-[68px] grid-cols-2">
            {group.map((tool) => (
              <ToolButton key={tool} name={tool} />
            ))}
          </div>
        </React.Fragment>
      ))}
    </div>
  </aside>
);

const ROUND_LEGS = [0, 1, 2, 3, 4, 5].map((i) => ({ x: 1126 - i * 72.3, y: 511 + i * 41.8 }));
const SLIM_LEGS = [0, 1, 2, 3, 4, 5, 6].map((i) => ({ x: 1260 - i * 61.4, y: 580 + i * 35.5 }));

const Viewport: React.FC = () => (
  <svg
    viewBox="74 141 1297 875"
    preserveAspectRatio="xMidYMid slice"
    className="block min-w-0 flex-1 bg-[#bfc1c8]"
    role="img"
    aria-label="Modelo"
  >
    <path d="M943.5 626 1371 872" stroke="#35b04b" strokeDasharray="1.5 3" />
    <path d="M944 626V1016" stroke="#4747c4" strokeWidth="1.5" strokeDasharray="1.5 3" />
    <path d="M104 141 943.5 626" stroke="#2fb043" strokeWidth="1.3" />
    <path d="M259 552 838 218l355 205-388 224-187-108 230-133" fill="none" stroke="#0a0a0a" strokeWidth="2.2" />
    <path d="M944 141V626" stroke="#5c46cf" strokeWidth="1.8" />

    <g strokeLinejoin="round" stroke="#060606" strokeWidth="2">
      {SLIM_LEGS.map((leg) => (
        <g key={leg.x} transform={`translate(${leg.x} ${leg.y})`}>
          <path d="M4 20h9v19l-5 2z" fill="#141414" />
          <path d="M-11 46V30L7 22v28q-1 12-9 12-6 0-9-13z" fill="#20201f" />
          <path d="M-18 18v28l7 3 5-2V26z" fill="#1b1b1a" />
          <path d="M-22 12v7l17 9 22-12v-6L-4 21z" fill="#151515" />
          <path d="M0 0l17 10L-5 21l-17-9z" fill="#1c1c1b" />
          <path d="M6 18h2v3H6z" fill="#1d5b93" stroke="none" />
        </g>
      ))}
      {ROUND_LEGS.map((leg) => (
        <g key={leg.x} transform={`translate(${leg.x} ${leg.y})`}>
          <path d="M4 21h9v15l-4 2z" fill="#141414" />
          <path d="M-13 46V30L5 21l5 17v17q-2 6-12 6-9 0-11-6z" fill="#20201f" />
          <path d="M-16 20v26l5 2 5-3V26z" fill="#1a1a19" />
          <path d="M-22 13v6l18 10 23-12v-6L-4 23z" fill="#151515" />
          <path d="M0 0l19 11L-4 23l-18-10z" fill="#1a1a19" />
          <path d="M5 20h3v3H5z" fill="#1d5b93" stroke="none" />
        </g>
      ))}
    </g>

    <path d="M943.5 626 1371 380" stroke="#c9252b" strokeWidth="1.3" />
    <path d="M943.5 626 271 1015" stroke="#b8383c" strokeDasharray="1.5 3" />

    <path d="M491 726v35l8-6 4 9 10-3-4-8 9-2z" fill="#d3d6df" />
    <path d="M494 730v27l7-6 4 12 6-2-4-10 8-1z" fill="#184870" />
  </svg>
);

const App: React.FC = () => {
  return (
    <div className="flex min-h-screen flex-col border-b border-[#3a3a3e] bg-[#f2f2f7] font-['Open_Sans',sans-serif] text-[#2b2b2f]">
      <nav className="flex h-[26px] items-center border-b border-[#dcdce6] px-1 pt-0.5">
        {MENU.map((item) => (
          <button key={item} type="button" className="px-[7px] text-[13px] leading-4">
            {item}
          </button>
        ))}
      </nav>

      <header className="h-[115px] overflow-hidden">
        {TOOLBAR_ROWS.map((row, index) => (
          <div key={index} className="flex h-[38px]">
            {row.map((tools) => (
              <Toolbar key={tools[0]} tools={tools} />
            ))}
          </div>
        ))}
      </header>

      <main className="flex flex-1 pr-0.5">
        <SidePanel />
        <Viewport />
      </main>

      <footer>
        <div className="flex h-[38px] w-[319px] items-center border border-[#e0e0ee]">
          <Grip />
          <label htmlFor="measures" className="w-[133px] text-[13px] leading-4 text-[#55575c]">
            Medidas
          </label>
          <input
            id="measures"
            type="text"
            className="h-6 w-[171px] rounded-[3px] border border-[#b4b5bb] bg-[#f5f5f9] px-2 text-[13px]"
          />
        </div>
        <p className="flex h-[25px] items-center px-4 font-['Noto_Sans',sans-serif] text-[13px] leading-4 text-[#4d5056]">
          Clique ou arraste para selecionar objetos. Shift = Adicionar/Subtrair. Ctrl = Adicionar. Shift + Ctrl = Subtrair.
        </p>
      </footer>
    </div>
  );
};

export default App;
